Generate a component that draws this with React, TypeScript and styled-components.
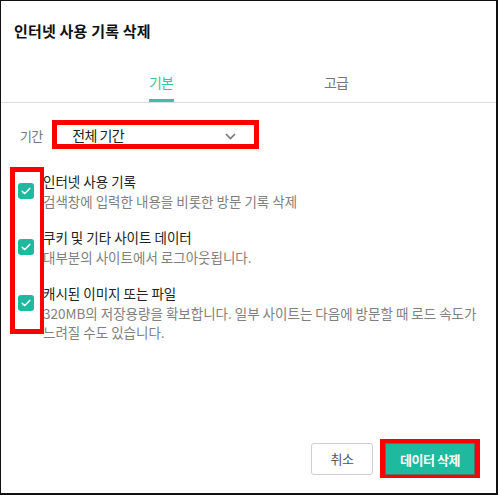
import styled, { createGlobalStyle } from "styled-components";

const GlobalStyle = createGlobalStyle`
  html, body {
    margin: 0;
    padding: 0;
    background: #fff;
  }
  body {
    font-family: "Noto Sans CJK KR", "Noto Sans", sans-serif;
  }
`

const Dialog = styled.div`
  width: 498px;
  height: 495px;
  box-sizing: border-box;
  border: 1px solid #111;
  border-right-width: 2px;
  border-bottom-width: 2px;
  background: #fff;
  display: flex;
  flex-direction: column;
`

const Title = styled.h1`
  margin: 0;
  padding: 20px 0 0 13px;
  font-size: 15px;
  line-height: 20px;
  font-weight: 700;
  letter-spacing: 0.2px;
  color: #111;
`

const TabBar = styled.div`
  margin-top: 21px;
  display: flex;
  justify-content: center;
  border-bottom: 1px solid #dcdcdc;
`

const Tab = styled.div<{ $active?: boolean }>`
  width: 175px;
  height: 40px;
  box-sizing: border-box;
  padding-top: 10px;
  display: flex;
  flex-direction: column;
  align-items: center;
  font-size: 14px;
  line-height: 20px;
  letter-spacing: -1px;
  color: ${(props) => (props.$active ? '#3dbfae' : '#777')};

  & i {
    margin-top: 7px;
    width: 25px;
    height: 3px;
    background: ${(props) => (props.$active ? '#3dbfae' : 'transparent')};
  }
`

const PeriodRow = styled.div`
  margin-top: 17px;
  padding-left: 19px;
  display: flex;
  align-items: center;
  gap: 10px;
`

const PeriodLabel = styled.span`
  font-size: 13px;
  line-height: 18px;
  color: #777;
  letter-spacing: -0.8px;
  margin-top: 3px;
`

// ? 빨간 표시는 셀렉트 테두리로 처리
const Select = styled.div`
  width: 207px;
  height: 29px;
  box-sizing: border-box;
  border: 5px solid #ff0000;
  padding: 0 18px 0 15px;
  display: flex;
  align-items: center;
  justify-content: space-between;
  font-size: 14px;
  color: #222;
  letter-spacing: -0.6px;

  & svg {
    margin-top: 3px;
  }
`

const OptionList = styled.div`
  position: relative;
  margin-top: 23px;
  display: flex;
  flex-direction: column;
  gap: 17px;
`

const Marker = styled.span`
  position: absolute;
  left: 9px;
  top: -5px;
  width: 34px;
  height: 167px;
  box-sizing: border-box;
  border: 5px solid #ff0000;
  border-right-width: 4px;
  pointer-events: none;
`

const OptionRow = styled.div`
  display: flex;
  align-items: flex-start;
  padding: 0 10px 0 17px;
  gap: 9px;
`

const CheckBox = styled.span`
  flex: none;
  margin-top: 11px;
  width: 16px;
  height: 16px;
  border-radius: 3px;
  background: #1fb9a0;
  display: flex;
  align-items: center;
  justify-content: center;
`

const OptionText = styled.div`
  font-size: 13.5px;
  line-height: 19.5px;
  letter-spacing: 0;
  word-break: keep-all;

  & b {
    display: block;
    font-weight: 400;
    color: #222;
  }

  & p {
    margin: 0;
    color: #808080;
  }
`

const Footer = styled.div`
  margin-top: auto;
  padding: 0 16px 15px 0;
  display: flex;
  align-items: center;
  justify-content: flex-end;
  gap: 7px;
`

// ? 빨간 강조 테두리
const Highlight = styled.span`
  display: flex;
  border: 5px solid #ff0000;
  border-top-width: 4px;
  border-bottom-width: 3px;
`

const Button = styled.button<{ $primary?: boolean }>`
  height: 32px;
  width: ${(props) => (props.$primary ? '90px' : '62px')};
  box-sizing: border-box;
  border-radius: ${(props) => (props.$primary ? '0' : '3px')};
  font-family: inherit;
  font-size: 13px;
  letter-spacing: -0.5px;
  font-weight: ${(props) => (props.$primary ? 700 : 400)};
  color: ${(props) => (props.$primary ? '#fff' : '#555')};
  background: ${(props) => (props.$primary ? '#1fb9a0' : '#fff')};
  border: 1px solid ${(props) => (props.$primary ? '#5d6d68' : '#cfcfcf')};
  padding: 0;
`

const options = [
    { title: '인터넷 사용 기록', desc: '검색창에 입력한 내용을 비롯한 방문 기록 삭제' },
    { title: '쿠키 및 기타 사이트 데이터', desc: '대부분의 사이트에서 로그아웃됩니다.' },
    { title: '캐시된 이미지 또는 파일', desc: '320MB의 저장용량을 확보합니다. 일부 사이트는 다음에 방문할 때 로드 속도가 느려질 수도 있습니다.' },
]

const Check = () => (
    <svg width="10" height="8" viewBox="0 0 10 8">
        <path d="M1.2 4.2 L3.8 6.6 L8.8 1.4" fill="none" stroke="#fff" strokeWidth="1.5" strokeLinecap="round" strokeLinejoin="round" />
    </svg>
)

const App: React.FC = () => {
    return (
        <>
            <GlobalStyle />
            <Dialog>
                <Title>인터넷 사용 기록 삭제</Title>
                <TabBar>
                    <Tab $active>기본<i /></Tab>
                    <Tab>고급<i /></Tab>
                </TabBar>
                <PeriodRow>
                    <PeriodLabel>기간</PeriodLabel>
                    <Select>
                        <span>전체 기간</span>
                        <svg width="11" height="7" viewBox="0 0 11 7">
                            <path d="M1 1 L5.5 5.5 L10 1" fill="none" stroke="#777" strokeWidth="1.6" />
                        </svg>
                    </Select>
                </PeriodRow>
                <OptionList>
                    {options.map((o) => (
                        <OptionRow key={o.title}>
                            <CheckBox><Check /></CheckBox>
                            <OptionText>
                                <b>{o.title}</b>
                                <p>{o.desc}</p>
                            </OptionText>
                        </OptionRow>
                    ))}
                    <Marker />
                </OptionList>
                <Footer>
                    <Button>취소</Button>
                    <Highlight>
                        <Button $primary>데이터 삭제</Button>
                    </Highlight>
                </Footer>
            </Dialog>
        </>
    )
}

export default App
